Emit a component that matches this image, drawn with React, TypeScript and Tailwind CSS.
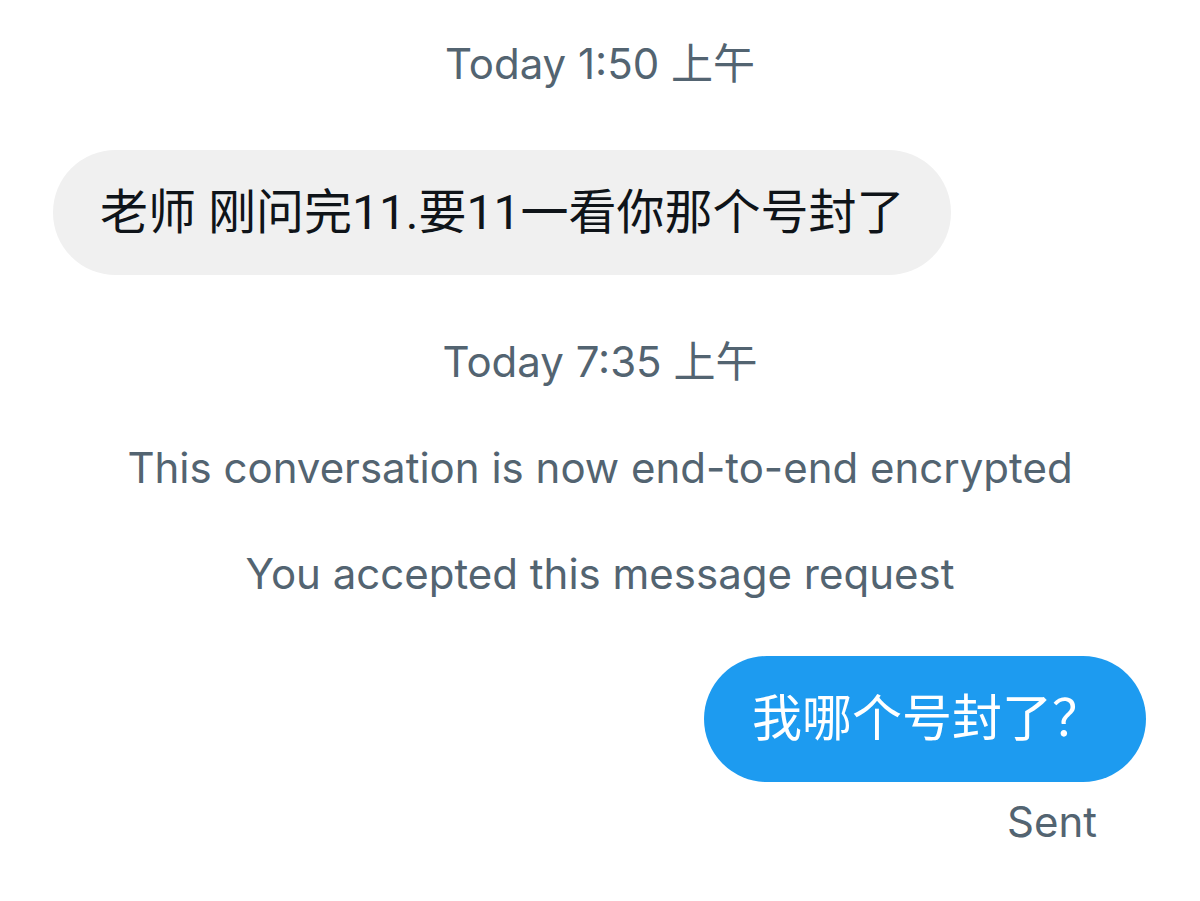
import React from "react";

const font = { fontFamily: '"Roboto", "Noto Sans CJK SC", sans-serif' };
const metaFont = { fontFamily: '"Inter", "Noto Sans CJK SC", sans-serif' };

const Meta = ({ children, className = "" }: { children: React.ReactNode; className?: string }) => (
      <div className={`text-center text-[42px] leading-[56px] text-[#536471] ${className}`} style={metaFont}>
            {children}
      </div>
);

export default function App() {
      return (
            <div className="w-[1200px] h-[901px] bg-white overflow-hidden pt-[36px]" style={font}>
                  <Meta>Today 1:50 上午</Meta>

                  {/* received */}
                  <div className="mt-[58px] pl-[53px] flex">
                        <div className="h-[125px] px-[47px] rounded-full bg-[#f0f0f0] flex items-center text-[48px] text-[#0f1419]">
                              老师 刚问完11.要11一看你那个号封了
                        </div>
                  </div>

                  <Meta className="mt-[59px]">Today 7:35 上午</Meta>
                  <Meta className="mt-[50px]">This conversation is now end-to-end encrypted</Meta>
                  <Meta className="mt-[50px]">You accepted this message request</Meta>

                  {/* sent */}
                  <div className="mt-[54px] pr-[54px] flex justify-end">
                        <div className="h-[126px] pl-[48px] pr-[44px] rounded-full bg-[#1d9bf0] flex items-center text-[50px] text-white">
                              我哪个号封了？
                        </div>
                  </div>
                  <div className="mt-[12px] pr-[103px] text-right text-[42px] leading-[56px] text-[#536471]" style={metaFont}>
                        Sent
                  </div>
            </div>
      );
}
